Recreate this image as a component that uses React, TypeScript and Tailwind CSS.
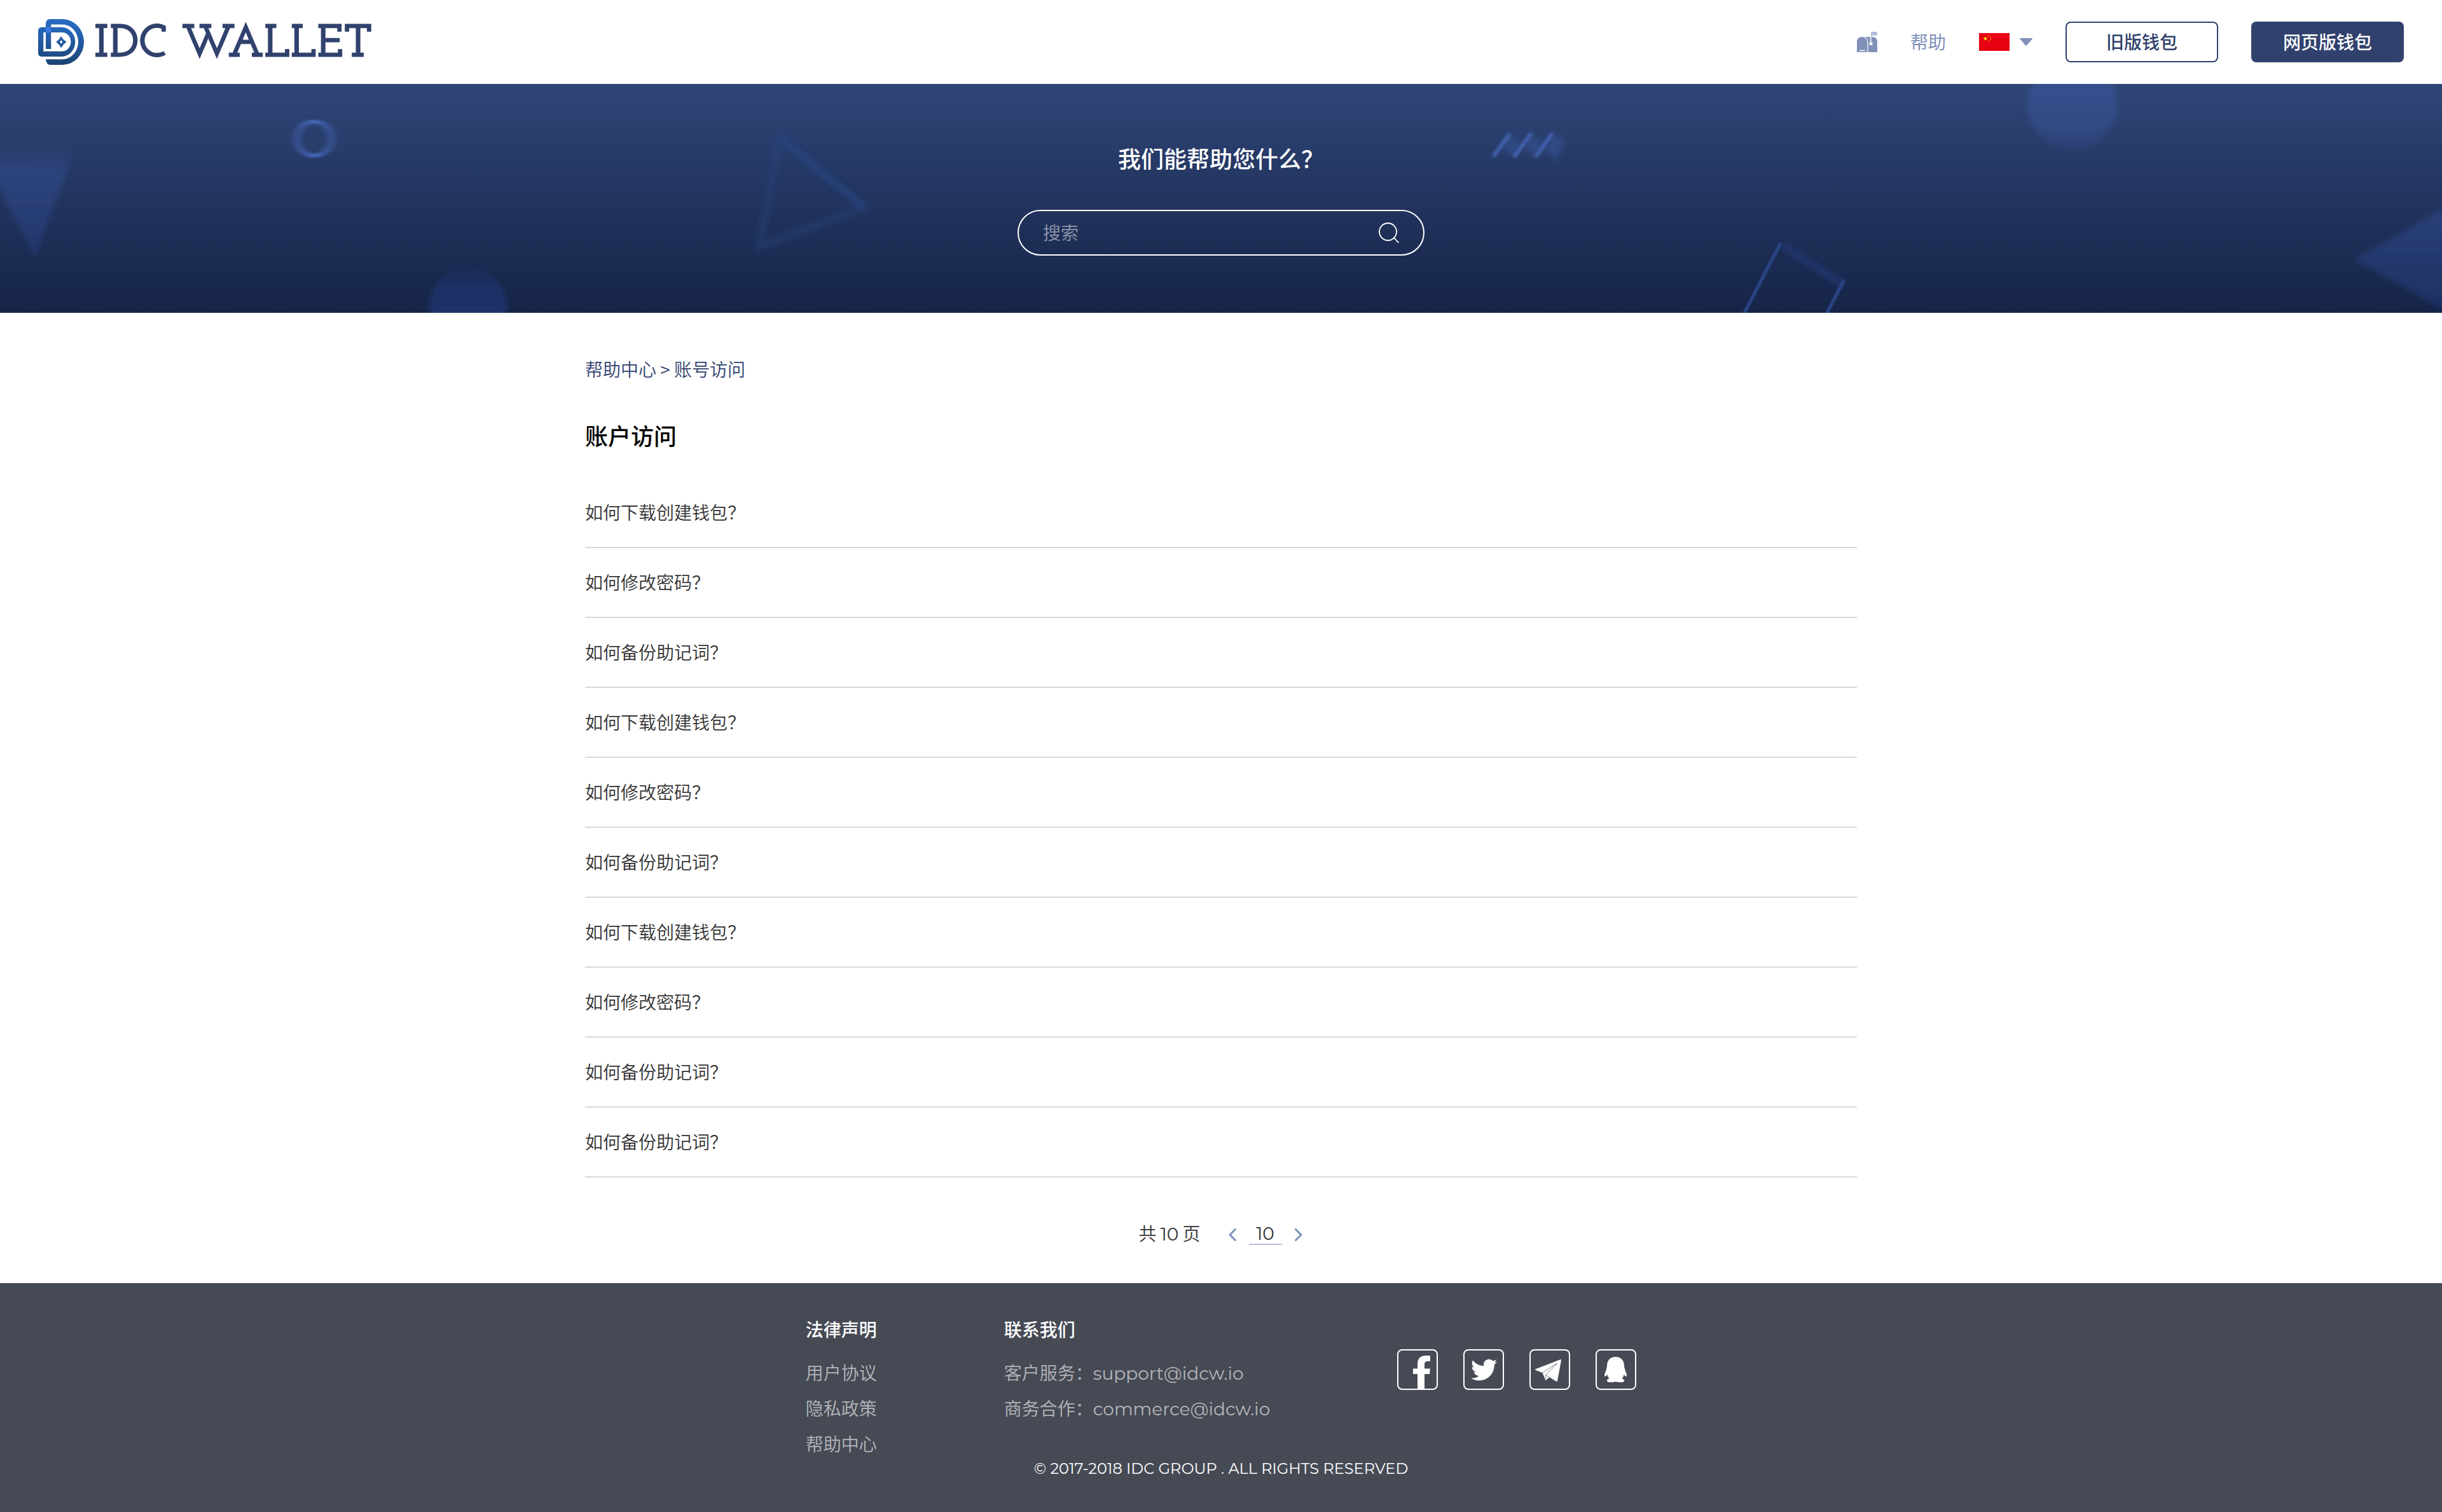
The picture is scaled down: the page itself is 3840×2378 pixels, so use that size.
import { FaTwitter } from "react-icons/fa";

const questions = [
  "如何下载创建钱包？",
  "如何修改密码？",
  "如何备份助记词？",
  "如何下载创建钱包？",
  "如何修改密码？",
  "如何备份助记词？",
  "如何下载创建钱包？",
  "如何修改密码？",
  "如何备份助记词？",
  "如何备份助记词？",
];

function LogoMark() {
  return (
    <svg viewBox="0 0 72 72" className="size-[72px]" aria-hidden="true">
      <defs>
        <linearGradient id="mark" gradientUnits="userSpaceOnUse" x1="0" y1="0" x2="0" y2="72">
          <stop offset="0" stopColor="#286cc2" />
          <stop offset="0.3" stopColor="#2562b2" />
          <stop offset="1" stopColor="#1b4475" />
        </linearGradient>
      </defs>
      <g fill="url(#mark)">
        <path d="M12 47V7.500Q12 0 19 0H38A34 36 0 0 1 38 72H19Q13 72 12 63.300H38A25 27.400 0 0 0 38 8.500H20.300V47Z" />
        <path
          fillRule="evenodd"
          d="M6 12.700H38A21.700 23.200 0 0 1 38 59H6Q0 59 0 53V18.700Q0 12.700 6 12.700ZM8.200 21V50.700H38A13.300 14.800 0 0 0 38 21Z"
        />
        <path
          fillRule="evenodd"
          d="M36.200 27Q39 32.500 44.400 36Q39 39.800 36.200 45.200Q33.300 39.800 28.200 36Q33.300 32.500 36.200 27ZM36.200 33.300L33.900 36L36.200 38.700L38.500 36Z"
        />
      </g>
      <rect x="12" y="12.700" width="8.300" height="8.300" fill="#3a7ade" />
    </svg>
  );
}

function MailboxIcon() {
  return (
    <svg viewBox="0 0 32 32" className="size-8" aria-hidden="true">
      <path d="M0 32V16Q0 8 8 8H24Q32 8 32 16V32Z" fill="#8090b9" />
      <path d="M10 8Q17 9 17 17V32" fill="none" stroke="#fff" strokeWidth="1.200" />
      <path d="M4 29.500H13" stroke="#fff" strokeWidth="1.500" />
      <path d="M22 4V18" stroke="#fff" strokeWidth="2.400" />
      <circle cx="22" cy="18.500" r="2.600" fill="#fff" />
      <path d="M22 17V1.500Q22 0 23.500 0H30.500Q32 0 32 1.500V4.500Q32 6 30.500 6H23V17Z" fill="#b3bdd8" />
    </svg>
  );
}

function ChinaFlag() {
  return (
    <svg viewBox="0 0 48 28" className="h-7 w-12" aria-hidden="true">
      <rect width="48" height="28" fill="#e70012" />
      <path
        d="M10 4.800L10.900 7.500H13.700L11.400 9.200L12.300 12L10 10.300L7.700 12L8.600 9.200L6.300 7.500H9.100Z"
        fill="#ffe800"
      />
      <g fill="#f9a800">
        <circle cx="15.500" cy="4.800" r="0.900" />
        <circle cx="18.300" cy="7" r="0.900" />
        <circle cx="18.300" cy="10.200" r="0.900" />
        <circle cx="15.500" cy="12.800" r="0.900" />
      </g>
    </svg>
  );
}

function HeroShapes() {
  return (
    <svg
      viewBox="0 0 3840 360"
      preserveAspectRatio="xMidYMid slice"
      className="absolute inset-0 size-full"
      aria-hidden="true"
    >
      <defs>
        <filter id="soft" x="-30%" y="-30%" width="160%" height="160%">
          <feGaussianBlur stdDeviation="4" />
        </filter>
        <filter id="wide" x="-60%" y="-20%" width="220%" height="140%">
          <feGaussianBlur stdDeviation="6 1" />
        </filter>
        <filter id="fine" x="-20%" y="-20%" width="140%" height="140%">
          <feGaussianBlur stdDeviation="1.200" />
        </filter>
        <filter id="streak" x="-20%" y="-30%" width="140%" height="160%">
          <feGaussianBlur stdDeviation="2" />
        </filter>
        <linearGradient id="wedge" x1="0" y1="0" x2="0" y2="1">
          <stop offset="0" stopColor="#2e4680" stopOpacity="0" />
          <stop offset="0.250" stopColor="#2d447e" />
          <stop offset="1" stopColor="#22366a" />
        </linearGradient>
        <linearGradient id="corner" x1="0" y1="0" x2="0" y2="1">
          <stop offset="0" stopColor="#2c407a" />
          <stop offset="0.600" stopColor="#22386b" />
          <stop offset="1" stopColor="#1e3064" />
        </linearGradient>
        <linearGradient id="moon" x1="0" y1="0" x2="0" y2="1">
          <stop offset="0.300" stopColor="#38508e" />
          <stop offset="0.700" stopColor="#324b86" />
          <stop offset="1" stopColor="#2c3f74" />
        </linearGradient>
        <linearGradient id="dome" x1="0" y1="0" x2="0" y2="1">
          <stop offset="0" stopColor="#1b2b58" />
          <stop offset="0.250" stopColor="#1f3166" />
          <stop offset="0.600" stopColor="#1f3167" />
        </linearGradient>
      </defs>
      <path d="M-36 98H119L55 272Z" fill="url(#wedge)" filter="url(#soft)" />
      <circle cx="494" cy="86" r="27" fill="none" stroke="#4465b6" strokeWidth="6" filter="url(#wide)" />
      <path
        d="M1226 84L1358 194L1194 256Z"
        fill="none"
        stroke="#2a447f"
        strokeOpacity="0.400"
        strokeWidth="12"
        filter="url(#soft)"
      />
      <path d="M1226 84L1358 194" stroke="#2a4580" strokeOpacity="0.600" strokeWidth="10" filter="url(#soft)" />
      <circle cx="736" cy="350" r="61" fill="url(#dome)" filter="url(#soft)" />
      <path
        d="M2374 78L2392 92L2381 116L2362 100ZM2407 78L2426 92L2415 116L2396 100ZM2441 78L2461 88L2448 120L2428 104Z"
        fill="#35508f"
        fillOpacity="0.700"
        filter="url(#soft)"
      />
      <path
        d="M2349 113L2373 80M2382 113L2407 79M2416 113L2440 79"
        fill="none"
        stroke="#4668ba"
        strokeWidth="5"
        strokeLinecap="round"
        filter="url(#streak)"
      />
      <circle cx="3259" cy="33" r="70" fill="url(#moon)" filter="url(#soft)" />
      <path d="M2804 254L2898 316" stroke="#21356a" strokeWidth="12" filter="url(#soft)" />
      <path
        d="M2800 250L2738 370M2900 308L2868 370"
        stroke="#2c4688"
        strokeWidth="5"
        fill="none"
        filter="url(#fine)"
      />
      <path d="M3702 276L3860 186V364Z" fill="url(#corner)" filter="url(#soft)" />
    </svg>
  );
}

function FacebookIcon() {
  return (
    <svg viewBox="0 0 60 60" className="size-full" fill="currentColor" aria-hidden="true">
      <path d="M30 60V37H23V28.500H30V22Q30 8 43 8H50V17H45.500Q41 17 41 21.500V28.500H50L49 37H41V60Z" />
    </svg>
  );
}

function TelegramIcon() {
  return (
    <svg viewBox="0 0 60 60" className="size-full" aria-hidden="true">
      <path
        d="M7.500 29.300L46.500 14.300Q48.300 13.600 48 15.500L42 47.500Q41.500 49.500 39.500 48.300L29.500 42L24.500 46.300Q23 47.500 22.500 45.500L18.500 35L7.800 31Q6.500 30 7.500 29.300Z"
        fill="#fff"
      />
      <path
        d="M18.500 35L41.500 20L23.500 38.500L22.800 46M23.500 38.500L29.500 42"
        fill="none"
        stroke="#464a55"
        strokeWidth="0.700"
      />
    </svg>
  );
}

function QqIcon() {
  return (
    <svg viewBox="0 0 60 60" className="size-full" fill="currentColor" aria-hidden="true">
      <path d="M29.500 10C21 10 16 16 16 24C16 26 15.500 27 15 28.500C15 30 14.500 31 14 32.500C12.500 35.500 11.500 38.500 12.300 40.500C13 41.500 15 40 16.500 38C17 40.500 18 42.500 19.500 44C17 45 15.500 46 16 48C16.500 50 21 50.300 24 50C26.500 49.800 28 49.300 29.500 49C31 49.300 32.500 49.800 35 50C38 50.300 42.500 50 43 48C43.500 46 42 45 39.500 44C41 42.500 42 40.500 42.500 38C44 40 46 41.500 46.700 40.500C47.500 38.500 46.500 35.500 45 32.500C44.500 31 44 30 44 28.500C43.500 27 43 26 43 24C43 16 38 10 29.500 10Z" />
    </svg>
  );
}

const socials = [
  { name: "Facebook", icon: <FacebookIcon /> },
  { name: "Twitter", icon: <FaTwitter className="size-[41px]" /> },
  { name: "Telegram", icon: <TelegramIcon /> },
  { name: "QQ", icon: <QqIcon /> },
];

function Header() {
  return (
    <header className="flex h-[132px] items-center justify-between bg-white px-[60px]">
      <a href="#" className="flex items-center gap-4" aria-label="IDC WALLET">
        <LogoMark />
        <span className="pt-[10px] font-['Josefin_Slab','DejaVu_Serif',serif] text-[73px] leading-[72px] font-bold text-[#30416d] [-webkit-text-stroke:1px_#30416d]">
          IDC WALLET
        </span>
      </a>
      <nav className="flex items-center gap-[52px] text-[28px] leading-10">
        <a href="#" aria-label="邮箱">
          <MailboxIcon />
        </a>
        <a href="#" className="pb-0.5 text-[#8090b9]">
          帮助
        </a>
        <button type="button" className="flex items-center gap-4" aria-label="选择语言">
          <ChinaFlag />
          <svg viewBox="0 0 20 12" className="h-3 w-5" aria-hidden="true">
            <path d="M1 0H19Q20.500 0 19.500 1.500L11 11.300Q10 12.400 9 11.300L0.500 1.500Q-0.500 0 1 0Z" fill="#8090b9" />
          </svg>
        </button>
        <button
          type="button"
          className="h-16 w-60 rounded-lg border-2 border-[#30416d] pb-0.5 font-medium text-[#30416d]"
        >
          旧版钱包
        </button>
        <button type="button" className="h-16 w-60 rounded-lg bg-[#30416d] pb-0.5 font-medium text-white">
          网页版钱包
        </button>
      </nav>
    </header>
  );
}

function Hero() {
  return (
    <section className="relative flex h-[360px] flex-col items-center overflow-hidden bg-linear-to-b from-[#304678] to-[#162447] pt-[90px]">
      <HeroShapes />
      <h1 className="relative text-4xl leading-[52px] font-medium text-white">我们能帮助您什么？</h1>
      <form
        role="search"
        className="relative mt-14 flex h-[72px] w-[640px] items-center rounded-full border-2 border-white pr-[38px] pl-[38px]"
      >
        <input
          type="search"
          aria-label="搜索"
          placeholder="搜索"
          className="min-w-0 flex-1 bg-transparent pb-0.5 text-[28px] leading-10 font-[350] text-white outline-none placeholder:text-white/50"
        />
        <button type="button" aria-label="开始搜索">
          <svg viewBox="0 0 32 32" className="size-8" fill="none" stroke="#fff" strokeWidth="1.800" aria-hidden="true">
            <circle cx="14.500" cy="14.500" r="13.500" />
            <path d="M24 24L31 31.500" strokeLinecap="round" />
          </svg>
        </button>
      </form>
    </section>
  );
}

function Pagination() {
  return (
    <nav
      aria-label="分页"
      className="mt-[70px] flex h-9 items-center justify-center pr-0.5 text-[28px] leading-9 text-[#333]"
    >
      <span className="font-[350]">
        共 <span className="font-[Montserrat,sans-serif] font-normal">10</span> 页
      </span>
      <button type="button" aria-label="上一页" className="mt-1 ml-11">
        <svg viewBox="0 0 12 20" className="h-5 w-3" fill="none" stroke="#7e8fbd" strokeWidth="3" aria-hidden="true">
          <path d="M10.500 1.500L2 10L10.500 18.500" strokeLinecap="round" strokeLinejoin="round" />
        </svg>
      </button>
      <input
        type="text"
        aria-label="页码"
        defaultValue="10"
        className="mx-5 h-9 w-[52px] border-b-2 border-[#b9c1d8] bg-transparent pt-0.5 text-center font-[Montserrat,sans-serif] outline-none"
      />
      <button type="button" aria-label="下一页" className="mt-1">
        <svg viewBox="0 0 12 20" className="h-5 w-3" fill="none" stroke="#7e8fbd" strokeWidth="3" aria-hidden="true">
          <path d="M1.500 1.500L10 10L1.500 18.500" strokeLinecap="round" strokeLinejoin="round" />
        </svg>
      </button>
    </nav>
  );
}

function Footer() {
  return (
    <footer className="bg-[#464a55] pt-[52px] pb-12 text-[28px] leading-10 text-white">
      <div className="flex items-start justify-center gap-[200px]">
        <section>
          <h2 className="font-medium">法律声明</h2>
          <ul className="mt-7 flex flex-col gap-4 font-[350] text-white/60">
            <li className="h-10"><a href="#">用户协议</a></li>
            <li className="h-10"><a href="#">隐私政策</a></li>
            <li className="h-10"><a href="#">帮助中心</a></li>
          </ul>
        </section>
        <section>
          <h2 className="font-medium">联系我们</h2>
          <ul className="mt-7 flex flex-col gap-4 font-[350] text-white/60">
            <li className="h-10">
              客户服务：
              <a href="mailto:support@idcw.io" className="font-[Montserrat,sans-serif] font-normal">support@idcw.io</a>
            </li>
            <li className="h-10">
              商务合作：
              <a href="mailto:commerce@idcw.io" className="font-[Montserrat,sans-serif] font-normal">commerce@idcw.io</a>
            </li>
          </ul>
        </section>
        <div className="mt-[52px] flex gap-10">
          {socials.map((s) => (
            <a
              key={s.name}
              href="#"
              aria-label={s.name}
              className="flex size-16 items-center justify-center rounded-lg border-2 border-white"
            >
              {s.icon}
            </a>
          ))}
        </div>
      </div>
      <p className="text-center font-[Montserrat,sans-serif] text-2xl leading-10">
        © 2017-2018 IDC GROUP . ALL RIGHTS RESERVED
      </p>
    </footer>
  );
}

export default function App() {
  return (
    <div className="bg-white font-['Noto_Sans_CJK_SC',sans-serif]" lang="zh-CN">
      <Header />
      <Hero />
      <main className="mx-auto max-w-[2000px] pt-[68px] pb-[60px]">
        <nav aria-label="面包屑" className="text-[28px] leading-10 font-[350] text-[#30416d]">
          <a href="#">帮助中心</a> &gt; <a href="#">账号访问</a>
        </nav>
        <h2 className="mt-[58px] text-4xl leading-[52px] font-medium text-black">账户访问</h2>
        <ul className="mt-[42px]">
          {questions.map((q, i) => (
            <li key={i} className="border-b-2 border-[#d8d8d8]">
              <a href="#" className="flex h-[108px] items-center pb-0.5 text-[28px] leading-10 font-[350] text-[#333]">
                {q}
              </a>
            </li>
          ))}
        </ul>
        <Pagination />
      </main>
      <Footer />
    </div>
  );
}
